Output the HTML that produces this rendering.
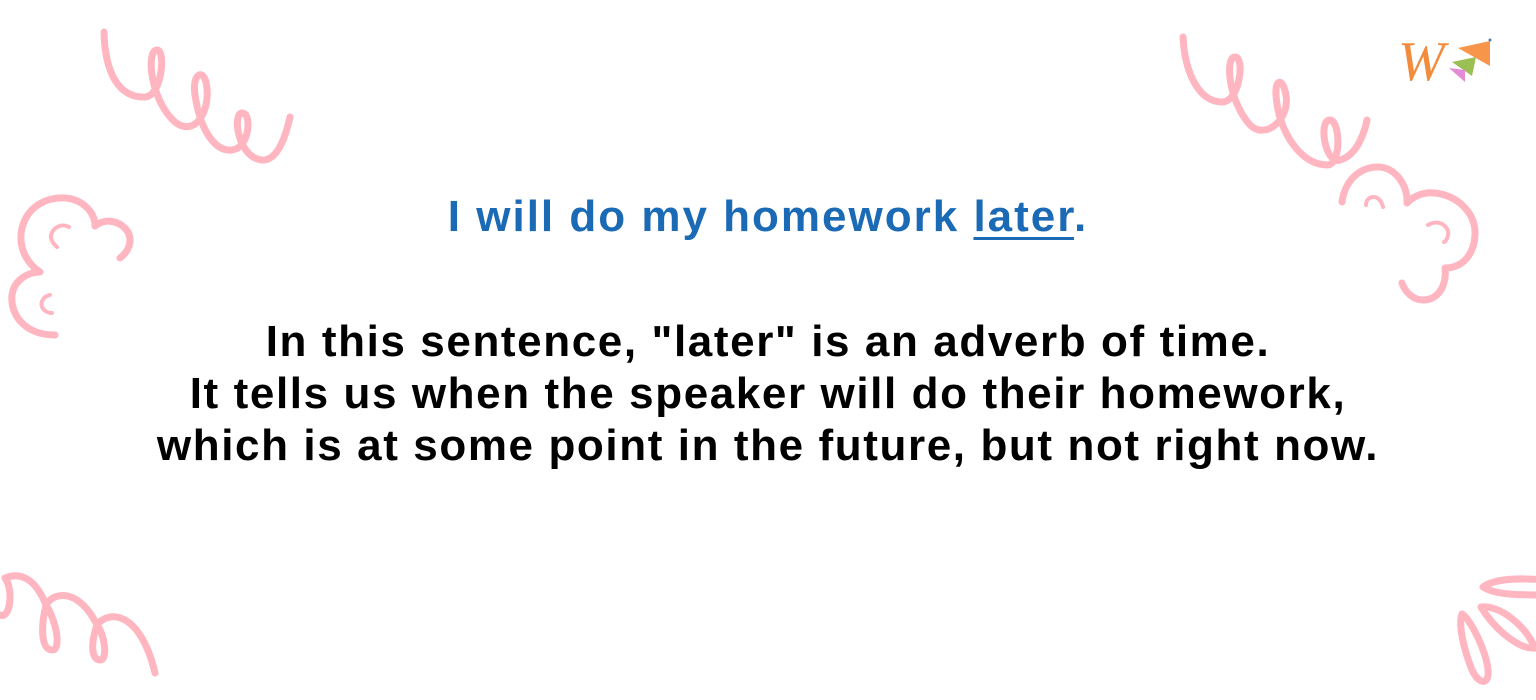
<!DOCTYPE html>
<html><head><meta charset="utf-8"><style>
html,body{margin:0;padding:0;background:#fff;}
body{width:1536px;height:700px;position:relative;overflow:hidden;font-family:"Liberation Sans",sans-serif;}
svg{position:absolute;left:0;top:0;}
.h{position:absolute;left:0;width:1536px;text-align:center;top:191px;font-size:44px;font-weight:bold;color:#1b6ab5;letter-spacing:2px;line-height:52px;}
.h u{text-decoration-thickness:3px;text-underline-offset:6px;}
.b{position:absolute;left:0;width:1536px;text-align:center;top:316px;font-size:44px;font-weight:bold;color:#000;line-height:52px;letter-spacing:1.6px;}
</style></head><body>
<svg width="1536" height="700" viewBox="0 0 1536 700" fill="none" stroke="#ffb6c1" stroke-width="7" stroke-linecap="round" stroke-linejoin="round">
<path d="M104,32 C105,75 120,98 145,97 C162,96 166,50 157,50 C146,50 150,100 175,122 C195,138 212,110 206,82 C202,68 192,75 195,95 C200,130 215,152 232,150 C250,148 252,112 242,113 C232,114 238,158 262,160 C278,161 286,135 290,117"/>
<path d="M55,335 C25,335 10,315 12,295 C14,280 28,272 40,272 C25,262 18,245 22,228 C28,205 48,197 65,198 C82,199 95,212 95,226 C105,218 120,220 128,232 C133,242 128,252 120,258"/>
<path d="M69,227 C60,222 50,230 51,238 C52,243 55,245 57,247" stroke-width="4"/>
<path d="M50,295 C44,296 40,302 42,307 C44,311 48,313 52,313" stroke-width="4"/>
<path d="M1183,37 C1185,75 1200,102 1222,102 C1240,102 1245,57 1235,57 C1225,57 1228,100 1250,125 C1265,140 1290,120 1286,95 C1283,78 1275,78 1276,95 C1278,130 1300,165 1327,165 C1342,165 1340,120 1330,120 C1318,120 1325,165 1340,160 C1358,155 1365,130 1367,120"/>
<path d="M1342,202 C1345,180 1360,167 1378,167 C1395,167 1408,185 1407,203 C1415,195 1425,192 1435,193 C1460,196 1476,215 1475,235 C1474,255 1462,268 1445,268 C1447,290 1435,300 1423,300 C1413,300 1405,292 1402,283"/>
<path d="M1366,205 C1366,195 1380,193 1383,207" stroke-width="4"/>
<path d="M1428,225 C1440,218 1450,228 1448,235 C1447,240 1445,242 1444,242" stroke-width="4"/>
<path d="M0,615 C10,620 14,590 5,578 C25,570 38,585 46,605 C40,630 42,650 52,650 C62,650 56,620 46,605 C55,590 80,590 97,625 C90,645 92,660 100,660 C108,660 105,635 97,625 C108,610 140,610 155,673"/>
<path d="M1483,587 C1495,578 1520,578 1545,580 L1545,595 C1520,595 1495,595 1483,587 Z"/>
<path d="M1481,607 C1500,605 1525,625 1535,648 C1520,650 1495,630 1481,607 Z"/>
<path d="M1462,614 C1472,620 1490,660 1488,675 C1487,685 1478,683 1472,670 C1464,650 1458,625 1462,614 Z"/>
<g stroke="none">
<polygon points="1458,48 1490,41 1490,66" fill="#f7964a"/>
<polygon points="1452,62 1476,57 1472,76" fill="#9bbf55"/>
<polygon points="1449,68 1465,70 1465,82" fill="#e58ad6"/>
<circle cx="1490" cy="40" r="1.5" fill="#5a7bb0"/>
</g>
<text x="1398" y="80" font-family="Liberation Serif,serif" font-style="italic" font-size="56" fill="#f28b3c" stroke="none">W</text>
</svg>
<div class="h">I will do my homework <u>later</u>.</div>
<div class="b">In this sentence, "later" is an adverb of time.<br>It tells us when the speaker will do their homework,<br>which is at some point in the future, but not right now.</div>
</body></html>
